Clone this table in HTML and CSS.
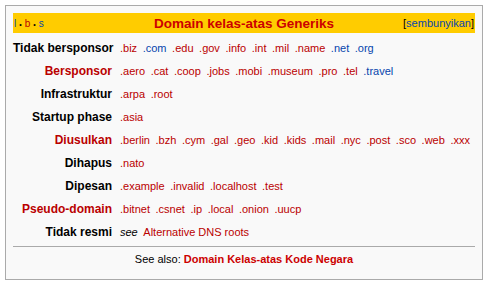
FILE: index.html
```html
<!DOCTYPE html>
<html>
<head>
<meta charset="utf-8">
<link rel="stylesheet" href="styles.css">
</head>
<body>
<div class="navbox">
  <div class="title">
    <span class="vbs"><a class="blue">l</a><span class="dot">•</span><a class="red">b</a><span class="dot">•</span><a class="blue">s</a></span>
    <span class="heading">Domain kelas-atas Generiks</span>
    <span class="hide">[<a class="blue">sembunyikan</a>]</span>
  </div>
  <div class="rows">
    <div class="label">Tidak bersponsor</div>
    <div class="list"><a>.biz</a> <a class="blue">.com</a> <a>.edu</a> <a>.gov</a> <a>.info</a> <a>.int</a> <a>.mil</a> <a>.name</a> <a class="blue">.net</a> <a class="blue">.org</a></div>

    <div class="label red">Bersponsor</div>
    <div class="list"><a>.aero</a> <a>.cat</a> <a>.coop</a> <a>.jobs</a> <a>.mobi</a> <a>.museum</a> <a>.pro</a> <a>.tel</a> <a class="blue">.travel</a></div>

    <div class="label">Infrastruktur</div>
    <div class="list"><a>.arpa</a> <a>.root</a></div>

    <div class="label">Startup phase</div>
    <div class="list"><a>.asia</a></div>

    <div class="label red">Diusulkan</div>
    <div class="list"><a>.berlin</a> <a>.bzh</a> <a>.cym</a> <a>.gal</a> <a>.geo</a> <a>.kid</a> <a>.kids</a> <a>.mail</a> <a>.nyc</a> <a>.post</a> <a>.sco</a> <a>.web</a> <a>.xxx</a></div>

    <div class="label">Dihapus</div>
    <div class="list"><a>.nato</a></div>

    <div class="label">Dipesan</div>
    <div class="list"><a>.example</a> <a>.invalid</a> <a>.localhost</a> <a>.test</a></div>

    <div class="label red">Pseudo-domain</div>
    <div class="list"><a>.bitnet</a> <a>.csnet</a> <a>.ip</a> <a>.local</a> <a>.onion</a> <a>.uucp</a></div>

    <div class="label">Tidak resmi</div>
    <div class="list"><i>see</i> <a class="phrase">Alternative DNS roots</a></div>
  </div>
  <div class="footer">See also: <a class="strong">Domain Kelas-atas Kode Negara</a></div>
</div>
</body>
</html>
```
FILE: styles.css
```css
html, body {
  margin: 0;
  padding: 0;
  background: #fff;
}
body {
  font-family: "Liberation Sans", Arial, sans-serif;
  font-size: 11px;
  color: #000;
}
a {
  color: #ba0000;
  text-decoration: none;
}
a.blue { color: #0645ad; }
a.red { color: #ba0000; }
.navbox {
  margin: 5px 6px 6px 5px;
  border: 1px solid #aaa;
  background: #f9f9f9;
  padding: 7px;
  height: 259px;
  box-sizing: content-box;
}
.title {
  background: #ffcc00;
  height: 20px;
  display: grid;
  grid-template-columns: 1fr auto 1fr;
  align-items: center;
  padding: 0 1px 0 1px;
}
.vbs {
  font-size: 10px;
  justify-self: start;
}
.vbs .dot {
  font-size: 7px;
  margin: 0 3px;
  color: #000;
}
.heading {
  font-weight: bold;
  font-size: 13.5px;
  color: #cc0000;
}
.hide {
  justify-self: end;
  font-size: 11px;
}
.rows {
  display: grid;
  grid-template-columns: 99px 1fr;
  column-gap: 8px;
  grid-auto-rows: 23px;
  margin-top: 3px;
  align-items: center;
}
.label {
  font-weight: bold;
  font-size: 12px;
  text-align: right;
  white-space: nowrap;
}
.label.red { color: #ba0000; }
.list {
  word-spacing: 2.5px;
  white-space: nowrap;
}
.list i, .list .phrase { word-spacing: 0; }
.footer {
  border-top: 1px solid #aaa;
  margin-top: 3px;
  padding-top: 4px;
  text-align: center;
  line-height: 16px;
}
.footer .strong {
  font-weight: bold;
  color: #cc0000;
}
```
